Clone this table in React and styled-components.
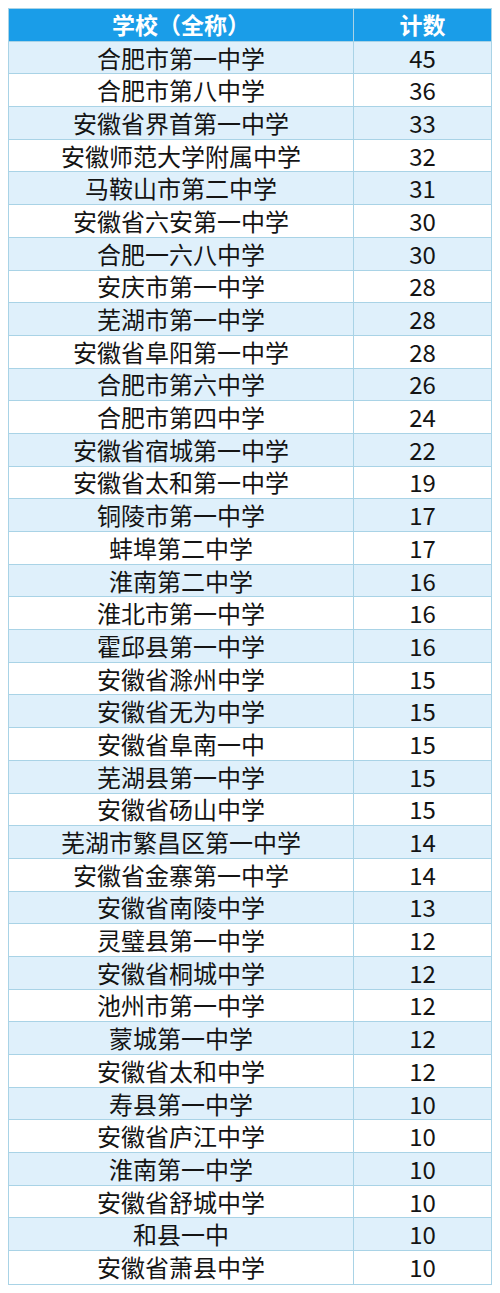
import React from 'react';
import styled, { createGlobalStyle } from 'styled-components';

const GlobalStyle = createGlobalStyle`
  html, body {
    margin: 0;
    padding: 0;
    background: #ffffff;
  }
  body {
    font-family: "Noto Sans CJK SC", "Noto Sans", sans-serif;
  }
`;

const rows = [
  ['合肥市第一中学', 45],
  ['合肥市第八中学', 36],
  ['安徽省界首第一中学', 33],
  ['安徽师范大学附属中学', 32],
  ['马鞍山市第二中学', 31],
  ['安徽省六安第一中学', 30],
  ['合肥一六八中学', 30],
  ['安庆市第一中学', 28],
  ['芜湖市第一中学', 28],
  ['安徽省阜阳第一中学', 28],
  ['合肥市第六中学', 26],
  ['合肥市第四中学', 24],
  ['安徽省宿城第一中学', 22],
  ['安徽省太和第一中学', 19],
  ['铜陵市第一中学', 17],
  ['蚌埠第二中学', 17],
  ['淮南第二中学', 16],
  ['淮北市第一中学', 16],
  ['霍邱县第一中学', 16],
  ['安徽省滁州中学', 15],
  ['安徽省无为中学', 15],
  ['安徽省阜南一中', 15],
  ['芜湖县第一中学', 15],
  ['安徽省砀山中学', 15],
  ['芜湖市繁昌区第一中学', 14],
  ['安徽省金寨第一中学', 14],
  ['安徽省南陵中学', 13],
  ['灵璧县第一中学', 12],
  ['安徽省桐城中学', 12],
  ['池州市第一中学', 12],
  ['蒙城第一中学', 12],
  ['安徽省太和中学', 12],
  ['寿县第一中学', 10],
  ['安徽省庐江中学', 10],
  ['淮南第一中学', 10],
  ['安徽省舒城中学', 10],
  ['和县一中', 10],
  ['安徽省萧县中学', 10],
];

const Page = styled.div`
  padding: 8px 8px 10px;
`;

const Table = styled.div`
  width: 484px;
  border: 1px solid #a9d3e6;
  box-sizing: border-box;
`;

const Row = styled.div`
  display: grid;
  grid-template-columns: 345px 1fr;
  height: 32.7px;
  box-sizing: border-box;
  border-bottom: 1px solid #a9d3e6;
  background: ${(p) => (p.$header ? '#1a9de8' : p.$shaded ? '#dff0fb' : '#ffffff')};
  color: ${(p) => (p.$header ? '#ffffff' : '#141414')};
  font-weight: ${(p) => (p.$header ? 700 : 400)};
  font-size: ${(p) => (p.$header ? '23px' : '24px')};

  &:last-child {
    border-bottom: none;
  }
`;

const Cell = styled.div`
  display: flex;
  align-items: center;
  justify-content: center;
  line-height: 1;
  white-space: nowrap;
  border-right: ${(p) => (p.$last ? 'none' : '1px solid #a9d3e6')};
`;

export default function App() {
  return (
    <>
      <GlobalStyle />
      <Page>
        <Table>
          <Row $header>
            <Cell>学校（全称）</Cell>
            <Cell $last>计数</Cell>
          </Row>
          {rows.map(([name, count], i) => (
            <Row key={name} $shaded={i % 2 === 0}>
              <Cell>{name}</Cell>
              <Cell $last>{count}</Cell>
            </Row>
          ))}
        </Table>
      </Page>
    </>
  );
}
